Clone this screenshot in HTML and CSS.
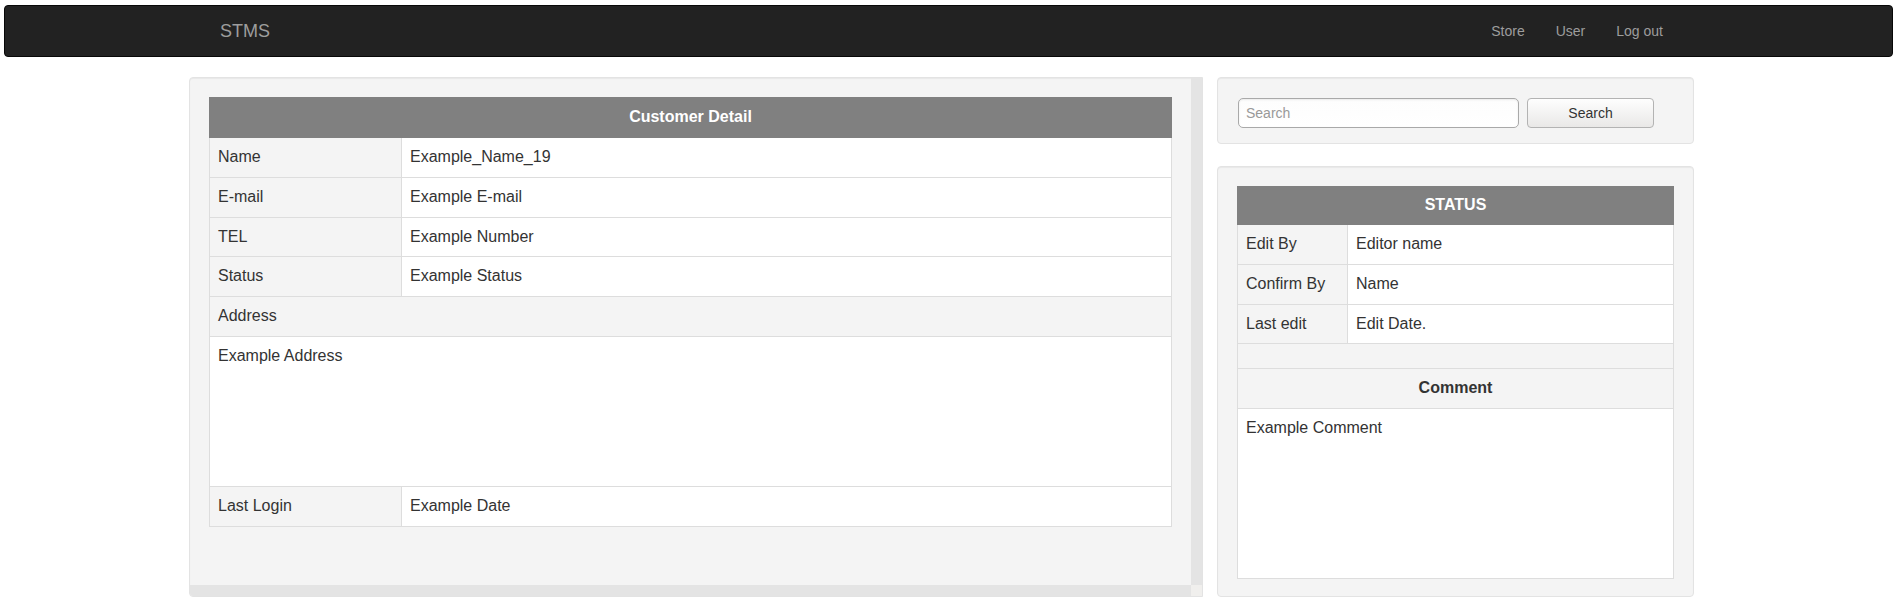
FILE: index.html
```html
<!DOCTYPE html>
<html lang="en">
<head>
<meta charset="utf-8">
<title>STMS - Customer Detail</title>
<link rel="stylesheet" href="styles.css">
</head>
<body>
<header class="navbar">
  <a class="brand" href="#">STMS</a>
  <nav class="nav-links">
    <a href="#">Store</a>
    <a href="#">User</a>
    <a href="#">Log out</a>
  </nav>
</header>
<main class="layout">
  <section class="well detail-panel">
    <div class="detail-scroll">
      <table class="info-table customer-table">
        <colgroup><col class="col-label-wide"><col></colgroup>
        <thead>
          <tr><th colspan="2">Customer Detail</th></tr>
        </thead>
        <tbody>
          <tr><td class="label">Name</td><td>Example_Name_19</td></tr>
          <tr><td class="label">E-mail</td><td>Example E-mail</td></tr>
          <tr><td class="label">TEL</td><td>Example Number</td></tr>
          <tr><td class="label">Status</td><td>Example Status</td></tr>
          <tr><td class="label" colspan="2">Address</td></tr>
          <tr><td colspan="2"><div class="address-body">Example Address</div></td></tr>
          <tr><td class="label">Last Login</td><td>Example Date</td></tr>
        </tbody>
      </table>
    </div>
    <div class="scroll-track vtrack"></div>
    <div class="scroll-track htrack"></div>
    <div class="scroll-corner"></div>
  </section>
  <aside class="sidebar">
    <form class="well search-well">
      <input class="search-input" type="text" placeholder="Search">
      <button class="search-btn" type="button">Search</button>
    </form>
    <section class="well status-well">
      <table class="info-table status-table">
        <colgroup><col class="col-label-narrow"><col></colgroup>
        <thead>
          <tr><th colspan="2">STATUS</th></tr>
        </thead>
        <tbody>
          <tr><td class="label">Edit By</td><td>Editor name</td></tr>
          <tr><td class="label">Confirm By</td><td>Name</td></tr>
          <tr><td class="label">Last edit</td><td>Edit Date.</td></tr>
          <tr><td class="label spacer" colspan="2"><div class="spacer-fill"></div></td></tr>
          <tr><td class="label section-title" colspan="2">Comment</td></tr>
          <tr><td colspan="2"><div class="comment-body">Example Comment</div></td></tr>
        </tbody>
      </table>
    </section>
  </aside>
</main>
</body>
</html>
```
FILE: styles.css
```css
* { box-sizing: border-box; }

html, body {
  margin: 0;
  padding: 0;
  background: #fff;
}

body {
  font-family: "Liberation Sans", Arial, Helvetica, sans-serif;
  font-size: 16px;
  line-height: 1.42857;
  color: #333;
}

/* Navbar */
.navbar {
  display: flex;
  align-items: center;
  justify-content: space-between;
  height: 52px;
  margin: 5px 7px 0 4px;
  padding: 0 229px 0 215px;
  background: #222;
  border: 1px solid #080808;
  border-radius: 4px;
}

.brand {
  font-size: 18px;
  color: #9d9d9d;
  text-decoration: none;
  line-height: 20px;
}

.nav-links {
  display: flex;
  gap: 31px;
}

.nav-links a {
  font-size: 14px;
  line-height: 20px;
  color: #9d9d9d;
  text-decoration: none;
}

/* Layout */
.layout {
  display: flex;
  gap: 14px;
  margin: 20px 0 0 189px;
  width: 1505px;
}

.well {
  background: #f4f4f4;
  border: 1px solid #e3e3e3;
  border-radius: 4px;
  box-shadow: inset 0 1px 1px rgba(0, 0, 0, 0.05);
}

.detail-panel {
  width: 1014px;
  height: 520px;
  display: grid;
  grid-template-columns: 1fr 11px;
  grid-template-rows: 1fr 11px;
  overflow: hidden;
  border-radius: 4px 0 0 4px;
}

.detail-scroll {
  padding: 19px;
  overflow: hidden;
}

.scroll-track {
  background: #e4e4e4;
}

.scroll-corner {
  background: #f0efed;
}

.sidebar {
  width: 477px;
  display: flex;
  flex-direction: column;
  gap: 22px;
}

/* Search */
.search-well {
  display: flex;
  gap: 8px;
  height: 67px;
  margin: 0;
  padding: 20px 19px 15px 20px;
}

.search-input {
  width: 281px;
  height: 30px;
  padding: 0 7px;
  font-family: "Liberation Sans", Arial, sans-serif;
  font-size: 14px;
  color: #555;
  background: linear-gradient(#fdfdfd, #fff);
  border: 1px solid #a9a9a9;
  border-radius: 5px;
  box-shadow: inset 0 1px 2px rgba(0, 0, 0, 0.08);
}

.search-input::placeholder {
  color: #999;
}

.search-btn {
  width: 127px;
  height: 30px;
  font-family: "Liberation Sans", Arial, sans-serif;
  font-size: 14px;
  color: #333;
  background: linear-gradient(#fefefe, #e9e8e7);
  border: 1px solid #b3b3b3;
  border-radius: 4px;
}

/* Status panel */
.status-well {
  height: 431px;
  padding: 19px;
}

/* Tables */
.info-table {
  width: 100%;
  border-collapse: collapse;
  border: 1px solid #ddd;
  background: #fff;
  table-layout: fixed;
}

.col-label-wide { width: 192px; }
.col-label-narrow { width: 110px; }

.info-table th {
  background: #808080;
  color: #fff;
  font-weight: bold;
  text-align: center;
  padding: 8px;
  border: 1px solid #808080;
}

.status-table th {
  padding: 7px 8px;
}

.info-table td {
  padding: 8px;
  border: 1px solid #ddd;
  vertical-align: top;
  text-align: left;
}

.info-table td.label {
  background: #f4f4f4;
}

.info-table td.spacer {
  padding: 0;
}

.spacer-fill {
  height: 24px;
}

.info-table td.section-title {
  text-align: center;
  font-weight: bold;
}

.address-body {
  height: 133px;
}

.comment-body {
  height: 153px;
}
```
